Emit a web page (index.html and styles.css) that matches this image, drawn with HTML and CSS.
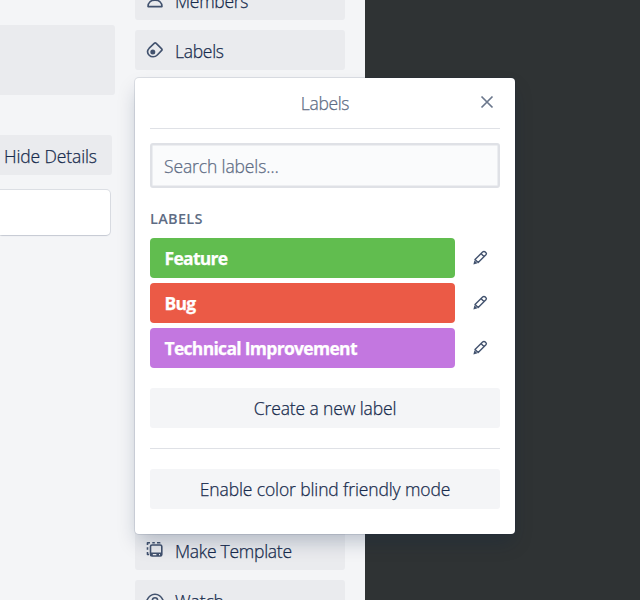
FILE: index.html
```html
<!DOCTYPE html>
<html lang="en">
<head>
<meta charset="utf-8">
<title>Card labels</title>
<link rel="stylesheet" href="styles.css">
</head>
<body>
<main class="card">
  <section class="details">
    <div class="block"></div>
    <div class="hide-button"><span class="t-hide">Hide Details</span></div>
    <div class="comment"></div>
  </section>
  <aside class="sidebar">
    <div class="side-group">
      <a class="side-button"><svg class="icon" viewBox="0 0 20 20"><circle cx="10" cy="6" r="4"/><path d="M3 16.600c0-4 3-6.500 7-6.500s7 2.500 7 6.500z"/></svg><span class="t-members">Members</span></a>
      <a class="side-button"><svg class="icon" viewBox="0 0 20 20"><path d="M9.200 3.400Q10.200 2.400 11.200 3.400L16.700 8.900Q17.400 9.700 16.700 10.400L12.300 15C10 17.400 6.200 17.300 4.200 15.200C2.100 13 2.300 10.200 4.200 8.200Z"/><circle class="solid" cx="7.800" cy="11.900" r="2.500"/></svg><span class="t-side-labels">Labels</span></a>
    </div>
    <div class="side-group">
      <a class="side-button"><svg class="icon" viewBox="0 0 20 20"><path d="M2.500 5V2.700H5M7.300 2.700h2.500M12 2.700h2.700V3.500M2.500 7.200v2.500M2.500 12v2.500H4"/><rect x="5.500" y="5" width="11.300" height="11" rx="1.600"/><path class="solid" d="M5.500 12.500h11.300v3.500h-11.300z"/><path class="cut" d="M7.800 14.700h3.600M14 14.700h1"/></svg><span class="t-make">Make Template</span></a>
      <a class="side-button"><svg class="icon" viewBox="0 0 20 20"><path d="M1.600 11C3.500 6.200 6.300 4.200 10 4.200s6.500 2 8.400 6.800C16.500 15.500 13.700 17.500 10 17.500S3.500 15.500 1.600 11z"/><circle cx="10" cy="10.300" r="2.600"/></svg><span class="t-watch">Watch</span></a>
    </div>
  </aside>
</main>
<div class="popover">
  <header class="pop-header">
    <span class="t-title">Labels</span>
    <svg class="close" viewBox="0 0 14 14"><path d="M1.500 1.500l11 11M12.500 1.500l-11 11"/></svg>
  </header>
  <div class="search"><span class="t-search">Search labels…</span></div>
  <h4 class="heading"><span class="t-heading">LABELS</span></h4>
  <ul class="labels">
    <li class="row"><div class="label green"><span class="t-feature">Feature</span></div><svg class="pencil" viewBox="0 0 16 16"><path d="M10.600 2.100Q11.600 1.100 12.700 1.600L14 2.700Q14.900 3.600 13.900 4.800L6.200 12.500L3 9.500ZM9.200 3.700l3 3"/><path class="solid" d="M2.400 10.200l3.100 3-4.100 1.200z"/></svg></li>
    <li class="row"><div class="label red"><span class="t-bug">Bug</span></div><svg class="pencil" viewBox="0 0 16 16"><path d="M10.600 2.100Q11.600 1.100 12.700 1.600L14 2.700Q14.900 3.600 13.900 4.800L6.200 12.500L3 9.500ZM9.200 3.700l3 3"/><path class="solid" d="M2.400 10.200l3.100 3-4.100 1.200z"/></svg></li>
    <li class="row"><div class="label purple"><span class="t-tech">Technical Improvement</span></div><svg class="pencil" viewBox="0 0 16 16"><path d="M10.600 2.100Q11.600 1.100 12.700 1.600L14 2.700Q14.900 3.600 13.900 4.800L6.200 12.500L3 9.500ZM9.200 3.700l3 3"/><path class="solid" d="M2.400 10.200l3.100 3-4.100 1.200z"/></svg></li>
  </ul>
  <div class="pop-button"><span class="t-create">Create a new label</span></div>
  <hr class="rule">
  <div class="pop-button"><span class="t-enable">Enable color blind friendly mode</span></div>
</div>
</body>
</html>
```
FILE: styles.css
```css
* { box-sizing: border-box; }
body {
  margin: 0;
  height: 600px;
  overflow: hidden;
  position: relative;
  background: #2f3334;
  color: #172b4d;
  font: 300 17.5px/24px "Open Sans", "Noto Sans", sans-serif;
  letter-spacing: -0.12px;
  -webkit-text-stroke: 0.25px currentColor;
}
span { white-space: nowrap; }
.card {
  width: 365px;
  height: 600px;
  display: flex;
  gap: 20px;
  background: #f4f5f7;
}
.details { width: 115px; padding-top: 25px; }
.block { height: 70px; background: #eaebee; border-radius: 0 3px 3px 0; }
.hide-button {
  width: 112px;
  height: 40px;
  margin-top: 40px;
  padding: 9px 0 0 4px;
  background: #eaebee;
  border-radius: 0 3px 3px 0;
}
.comment {
  width: 110px;
  height: 45px;
  margin-top: 15px;
  background: #fff;
  border-radius: 0 4px 4px 0;
  box-shadow: 0 1px 2px -1px rgba(9, 30, 66, .35), 0 0 0 1px rgba(9, 30, 66, .1);
}
.sidebar {
  width: 210px;
  height: 640px;
  margin-top: -20px;
  display: flex;
  flex-direction: column;
  justify-content: space-between;
}
.side-group { display: flex; flex-direction: column; gap: 10px; }
.side-button {
  height: 40px;
  padding: 0 10px;
  display: flex;
  align-items: center;
  gap: 10px;
  background: #eaebee;
  border-radius: 3px;
}
.side-button span { padding-top: 2px; }
.t-side-labels, .t-make, .t-members { letter-spacing: -0.28px; }
.t-title { letter-spacing: -0.35px; }
.icon, .pencil { fill: none; stroke: #42526e; stroke-width: 1.6; stroke-linejoin: round; }
.icon { width: 20px; height: 20px; }
.solid { fill: #42526e; stroke: none; }
.icon .cut { stroke: #eaebee; stroke-width: 1.2; }
.popover {
  position: absolute;
  left: 135px;
  top: 78px;
  width: 380px;
  height: 456px;
  padding: 0 15px;
  background: #fff;
  border-radius: 4px;
  box-shadow: 0 10px 20px -3px rgba(9, 30, 66, .25), 0 0 0 1px rgba(9, 30, 66, .1);
}
.pop-header {
  height: 51px;
  display: grid;
  grid-template-columns: 30px 1fr 30px;
  align-items: center;
  border-bottom: 1px solid #dfe1e6;
  color: #5e6c84;
}
.pop-header span { grid-column: 2; text-align: center; }
.close { width: 14px; height: 14px; margin-left: 10px; margin-top: -2px; stroke: #6b778c; stroke-width: 1.7; }
.search {
  height: 45px;
  margin-top: 14px;
  padding: 9px 12px;
  border: 2px solid #dfe1e6;
  border-radius: 3px;
  background: #fafbfc;
  box-shadow: inset 0 0 0 .5px #dfe1e6;
  color: #5e6c84;
}
.heading {
  margin: 20px 0 0;
  height: 30px;
  font-size: 14.5px;
  line-height: 22px;
  font-weight: 600;
  letter-spacing: 0.3px;
  -webkit-text-stroke: 0;
  color: #5e6c84;
}
.labels { list-style: none; margin: 0; padding: 0; display: flex; flex-direction: column; gap: 5px; }
.row { display: flex; align-items: center; gap: 16.5px; }
.label {
  width: 305px;
  height: 40px;
  padding: 8px 14.500px 0;
  border-radius: 4px;
  color: #fff;
  font-weight: 700;
  letter-spacing: -0.7px;
}
.green { background: #61bd4f; }
.red { background: #eb5a46; }
.purple { background: #c377e0; }
.pencil { width: 16px; height: 16px; stroke-width: 1.4; }
.pop-button {
  height: 40px;
  margin-top: 20px;
  padding-top: 8px;
  background: #f4f5f7;
  border-radius: 3px;
  text-align: center;
}
.rule { height: 1px; margin: 20px 0 0; border: 0; background: #dfe1e6; }
```
